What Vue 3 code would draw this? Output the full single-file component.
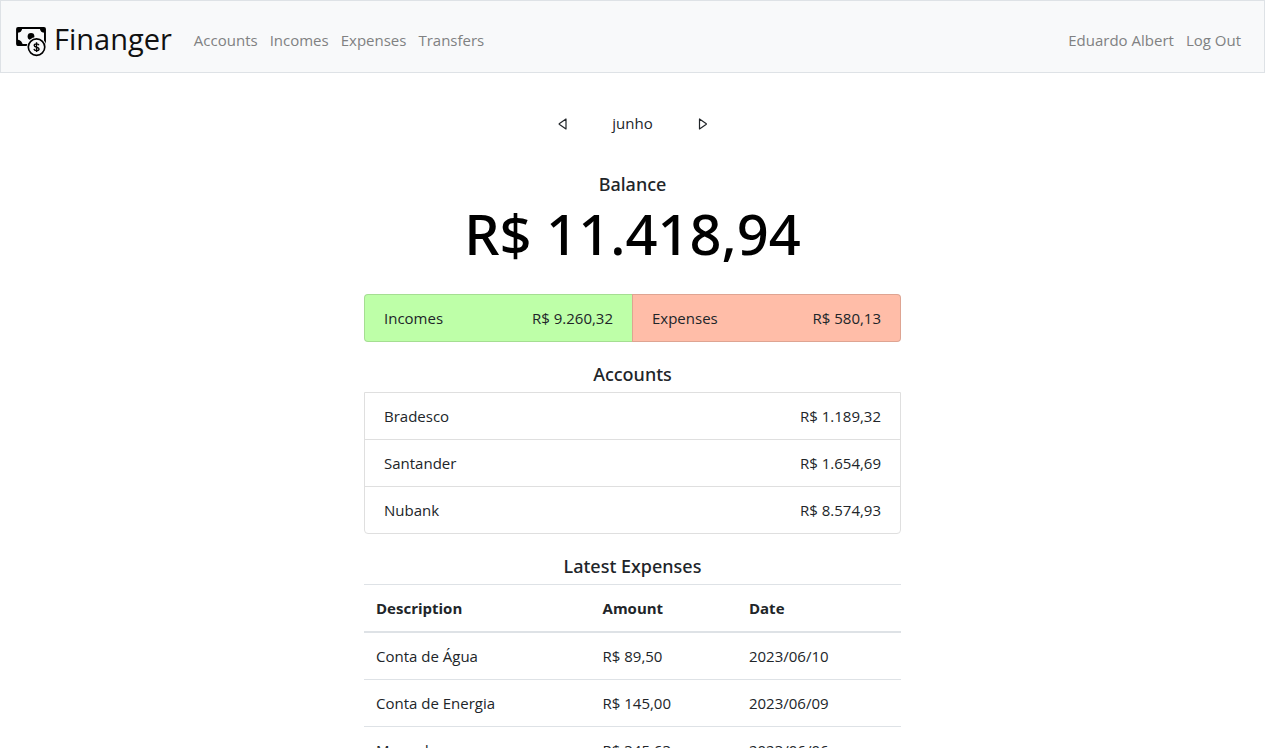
<script setup>
const links = ['Accounts', 'Incomes', 'Expenses', 'Transfers']
const accounts = [
  { name: 'Bradesco', amount: 'R$ 1.189,32' },
  { name: 'Santander', amount: 'R$ 1.654,69' },
  { name: 'Nubank', amount: 'R$ 8.574,93' },
]
const expenses = [
  { description: 'Conta de Água', amount: 'R$ 89,50', date: '2023/06/10' },
  { description: 'Conta de Energia', amount: 'R$ 145,00', date: '2023/06/09' },
  { description: 'Mercado', amount: 'R$ 345,63', date: '2023/06/06' },
]
</script>

<template>
  <div class="page">
    <nav class="navbar">
      <a class="brand" href="#">
        <svg class="logo" viewBox="0 0 32 32" aria-hidden="true">
          <rect x="1.1" y="2.1" width="28.800" height="17.500" rx="1" fill="none" stroke="#000" stroke-width="2" />
          <path d="M1 2h5.500a5.500 5.500 0 0 1-5.500 5zM30 2h-5.500a5.500 5.500 0 0 0 5.500 5zM1 20v-6a6 6 0 0 1 6 6z" fill="#000" />
          <circle cx="15.500" cy="10.800" r="3.500" fill="#000" />
          <circle cx="21.200" cy="21.800" r="10.400" fill="#f8f9fa" />
          <circle cx="21.200" cy="21.800" r="8.500" fill="none" stroke="#000" stroke-width="1.700" />
          <path d="M23.700 19.900c-.3-1.100-1.200-1.500-2.500-1.500-1.500 0-2.400.6-2.400 1.700 0 2.500 5 1.100 5 3.600 0 1.100-1.100 1.700-2.600 1.700s-2.500-.6-2.700-1.800M21.200 16.800v10" fill="none" stroke="#000" stroke-width="1.400" />
        </svg>
        <span>Finanger</span>
      </a>
      <a v-for="link in links" :key="link" class="nav-link" href="#">{{ link }}</a>
      <div class="user-links">
        <a class="nav-link" href="#">Eduardo Albert</a>
        <a class="nav-link" href="#">Log Out</a>
      </div>
    </nav>

    <main class="content">
      <div class="month">
        <button type="button" class="arrow" aria-label="Previous month">
          <svg viewBox="0 0 16 16" aria-hidden="true"><path d="M11 4v10L4.500 9.600Q3.700 9 4.500 8.400Z" /></svg>
        </button>
        <span>junho</span>
        <button type="button" class="arrow" aria-label="Next month">
          <svg viewBox="0 0 16 16" aria-hidden="true"><path d="M5.500 4v10L12 9.600Q12.800 9 12 8.400Z" /></svg>
        </button>
      </div>

      <h2 class="title">Balance</h2>
      <p class="balance">R$ 11.418,94</p>

      <div class="totals">
        <div class="total income"><span>Incomes</span><span>R$ 9.260,32</span></div>
        <div class="total expense"><span>Expenses</span><span>R$ 580,13</span></div>
      </div>

      <h2 class="title">Accounts</h2>
      <ul class="accounts">
        <li v-for="account in accounts" :key="account.name">
          <span>{{ account.name }}</span><span>{{ account.amount }}</span>
        </li>
      </ul>

      <h2 class="title">Latest Expenses</h2>
      <table class="expenses">
        <thead>
          <tr><th scope="col">Description</th><th scope="col">Amount</th><th scope="col">Date</th></tr>
        </thead>
        <tbody>
          <tr v-for="expense in expenses" :key="expense.description">
            <td>{{ expense.description }}</td><td>{{ expense.amount }}</td><td>{{ expense.date }}</td>
          </tr>
        </tbody>
      </table>
    </main>
  </div>
</template>

<style>
body {
  background: #fff;
}
</style>

<style scoped>
.page {
  height: 100vh;
  overflow: hidden;
  color: #212529;
  font: 15px/22px "Segoe UI", "Open Sans", "Noto Sans", sans-serif;
}
.page * {
  box-sizing: border-box;
}
.navbar {
  display: flex;
  align-items: center;
  min-height: 73px;
  padding: 14px 17px 8px 15px;
  border: 1px solid #dee2e6;
  background: #f8f9fa;
}
.brand {
  display: flex;
  align-items: center;
  gap: 7px;
  margin-right: 16px;
  color: #111;
  font-size: 29px;
  line-height: 40px;
  text-decoration: none;
}
.brand span {
  padding-bottom: 2px;
}
.logo {
  width: 31px;
  height: 31px;
  margin-top: 3px;
}
.nav-link {
  padding: 6px;
  color: #808182;
  text-decoration: none;
}
.user-links {
  display: flex;
  margin-left: auto;
}
.content {
  width: 100%;
  max-width: 537px;
  margin: 0 auto;
}
.month {
  display: flex;
  align-items: center;
  justify-content: center;
  gap: 38px;
  padding: 39px 0;
}
.arrow {
  display: flex;
  padding: 3px;
  border: 0;
  background: none;
}
.arrow svg {
  width: 16px;
  height: 16px;
  fill: none;
  stroke: #212529;
  stroke-width: 1.2;
  stroke-linejoin: round;
}
.title {
  margin: 0;
  padding-bottom: 7px;
  font-family: "Segoe UI", "Noto Sans", sans-serif;
  font-size: 18px;
  line-height: 22px;
  font-weight: 500;
  text-align: center;
}
.balance {
  margin: 0 0 30px;
  color: #000;
  font-family: "Segoe UI", "Noto Sans", sans-serif;
  font-size: 56px;
  line-height: 62px;
  font-weight: 500;
  text-align: center;
}
.totals {
  display: flex;
  margin-bottom: 21px;
}
.total {
  display: flex;
  flex: 1;
  justify-content: space-between;
  padding: 12px 19px;
  border: 1px solid rgba(0, 0, 0, 0.13);
}
.income {
  border-right: 0;
  border-radius: 4px 0 0 4px;
  background: #beffa8;
}
.expense {
  border-radius: 0 4px 4px 0;
  background: #ffbda8;
}
.accounts {
  margin: 0 0 21px;
  padding: 0;
  border: 1px solid #dfdfdf;
  border-radius: 0 0 4px 4px;
  list-style: none;
}
.accounts li {
  display: flex;
  justify-content: space-between;
  padding: 12px 19px;
}
.accounts li + li {
  border-top: 1px solid #dfdfdf;
}
.expenses {
  width: 100%;
  border-collapse: collapse;
  text-align: left;
}
.expenses th,
.expenses td {
  padding: 12px;
  border-top: 1px solid #dee2e6;
}
.expenses thead th {
  border-bottom: 2px solid #dee2e6;
  font-weight: 700;
}
</style>
